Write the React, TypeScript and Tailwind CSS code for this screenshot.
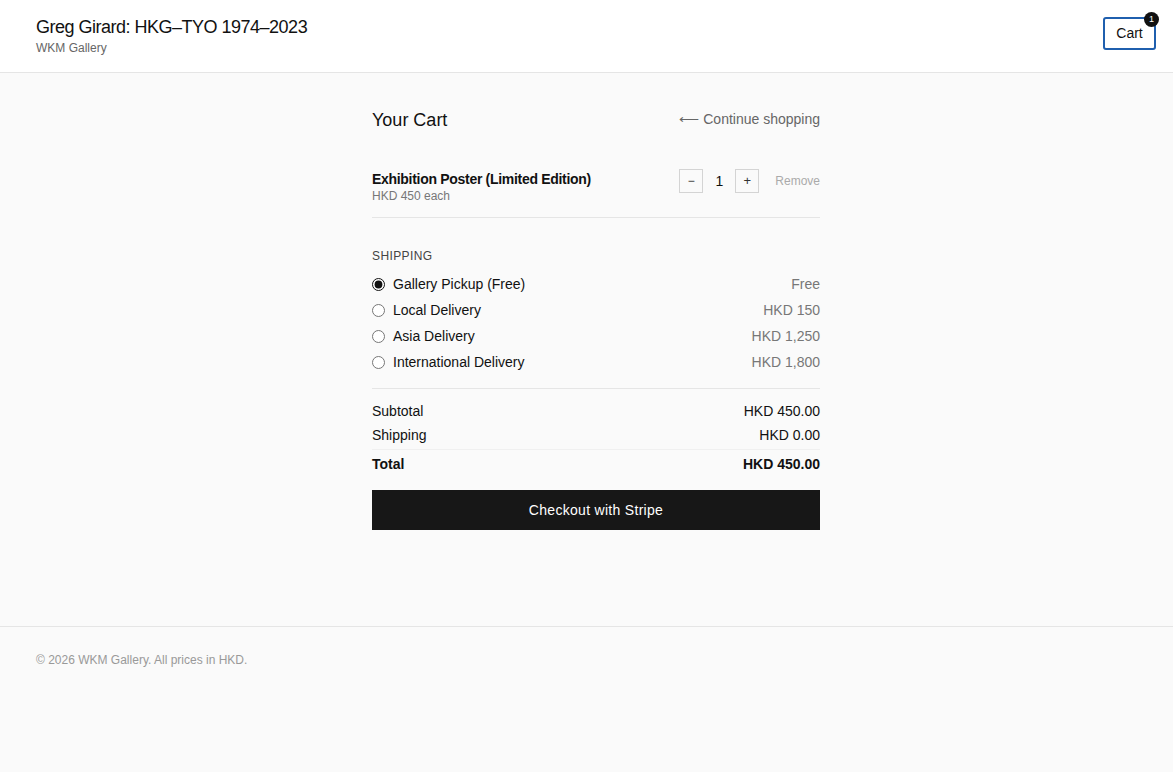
import React from "react";

const font = { fontFamily: '"Liberation Sans", Arial, Helvetica, sans-serif' };

const options = [
  { label: "Gallery Pickup (Free)", price: "Free", checked: true },
  { label: "Local Delivery", price: "HKD 150", checked: false },
  { label: "Asia Delivery", price: "HKD 1,250", checked: false },
  { label: "International Delivery", price: "HKD 1,800", checked: false },
];

export default function App() {
  return (
    <div className="min-h-screen bg-[#fafafa] text-[#111]" style={font}>
      <header className="h-[73px] bg-white border-b border-[#e5e5e5] flex justify-between items-start pl-[36px] pr-[17px]">
        <div className="pt-[15px]">
          <div className="text-[18px] leading-[24px] font-medium tracking-[-0.5px]">Greg Girard: HKG–TYO 1974–2023</div>
          <div className="mt-[1px] text-[12px] leading-[16px] text-[#666]">WKM Gallery</div>
        </div>
        <div className="mt-[17px] relative">
          <button className="w-[53px] h-[33px] border-2 border-[#1f5fae] rounded-[3px] text-[14px] bg-white text-[#111] flex items-center justify-center">
            Cart
          </button>
          <span className="absolute -top-[5px] -right-[3px] w-[15px] h-[15px] rounded-full bg-[#111] text-white text-[9px] leading-none flex items-center justify-center">
            1
          </span>
        </div>
      </header>

      <main className="pl-[19px] pt-[32px] pb-[96px]">
        <div className="mx-auto w-[448px]">
          <div className="flex justify-between items-center h-[28px] pt-[1px]">
            <h1 className="text-[18px] leading-[28px] font-medium">Your Cart</h1>
            <span className="text-[14px] text-[#666]">⟵ Continue shopping</span>
          </div>

          <div className="mt-[36px] flex justify-between items-start border-b border-[#e5e5e5] pb-[12px]">
            <div className="pt-[1px]">
              <div className="text-[14px] leading-[18px] font-semibold tracking-[-0.3px]">Exhibition Poster (Limited Edition)</div>
              <div className="text-[12px] leading-[17px] text-[#777]">HKD 450 each</div>
            </div>
            <div className="flex items-center">
              <button className="w-[24px] h-[24px] border border-[#d4d4d4] bg-transparent text-[12px] text-[#333] flex items-center justify-center">−</button>
              <span className="w-[32px] text-center text-[14px]">1</span>
              <button className="w-[24px] h-[24px] border border-[#d4d4d4] bg-transparent text-[13px] text-[#333] flex items-center justify-center">+</button>
              <span className="ml-[16px] text-[12px] text-[#aaa]">Remove</span>
            </div>
          </div>

          <div className="pt-[30px] pb-[16px] border-b border-[#e5e5e5]">
            <div className="text-[12px] leading-[16px] tracking-[0.4px] text-[#444] uppercase">Shipping</div>
            <div className="mt-[10px] flex flex-col gap-[6px]">
              {options.map((o) => (
                <label key={o.label} className="flex items-center justify-between h-[20px] text-[14px]">
                  <span className="flex items-center">
                    <input
                      type="radio"
                      name="ship"
                      defaultChecked={o.checked}
                      className="w-[13px] h-[13px] m-0 accent-[#111]"
                    />
                    <span className="ml-[8px]">{o.label}</span>
                  </span>
                  <span className="text-[#777]">{o.price}</span>
                </label>
              ))}
            </div>
          </div>

          <div className="pt-[12px] text-[14px]">
            <div className="flex justify-between h-[20px] leading-[20px]">
              <span>Subtotal</span>
              <span>HKD 450.00</span>
            </div>
            <div className="flex justify-between h-[20px] leading-[20px] mt-[4px]">
              <span>Shipping</span>
              <span>HKD 0.00</span>
            </div>
            <div className="flex justify-between h-[25px] leading-[20px] mt-[4px] pt-[4px] border-t border-[#f0f0f0] font-semibold">
              <span>Total</span>
              <span>HKD 450.00</span>
            </div>
          </div>

          <button className="mt-[16px] w-full h-[40px] bg-[#171717] text-white text-[14px] font-medium tracking-[0.3px]">
            Checkout with Stripe
          </button>
        </div>
      </main>

      <footer className="border-t border-[#e5e5e5] pt-[25px] pl-[36px] pb-[24px]">
        <div className="text-[12px] leading-[16px] text-[#999]">© 2026 WKM Gallery. All prices in HKD.</div>
      </footer>
    </div>
  );
}
